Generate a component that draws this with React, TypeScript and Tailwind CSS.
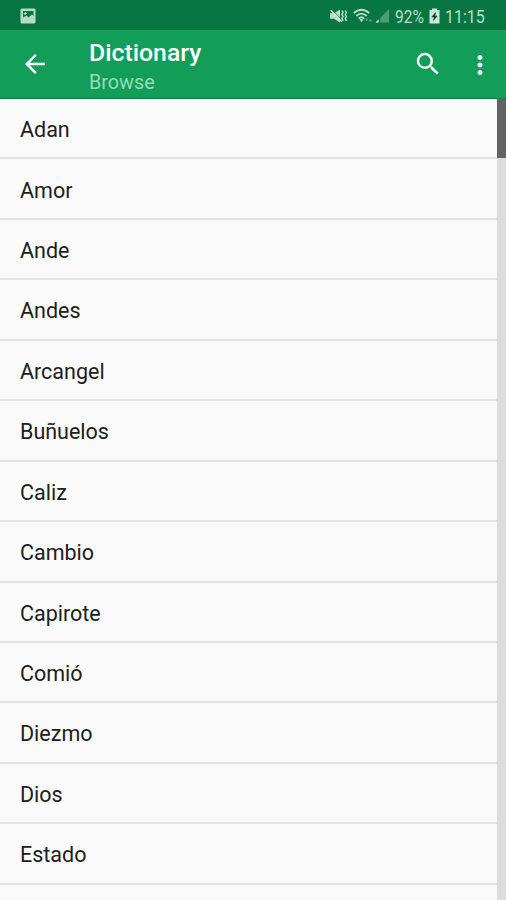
import { MdArrowBack, MdMoreVert, MdSearch } from 'react-icons/md';

const words = [
  'Adan',
  'Amor',
  'Ande',
  'Andes',
  'Arcangel',
  'Buñuelos',
  'Caliz',
  'Cambio',
  'Capirote',
  'Comió',
  'Diezmo',
  'Dios',
  'Estado',
];

function ImageIcon() {
  return (
    <svg className="h-4 w-4" viewBox="0 0 16 16" aria-hidden="true">
      <rect x="0.5" y="0.5" width="15" height="15" rx="1.5" fill="#b5dbc3" />
      <path d="M3 3h10.500v5L12 6.500 8.500 9.500 6.500 7.500 3 9.500z" fill="#087642" />
      <path d="M3.500 5.500l2-1.500 1.500 1.500-2 1.500z" fill="#b5dbc3" />
    </svg>
  );
}

function MuteIcon() {
  return (
    <svg className="h-4 w-[18px]" viewBox="0 0 18 16" aria-hidden="true">
      <path d="M0 5.200h4L10 1.500v13L4 10.800H0z" fill="#b9dfc8" />
      <path d="M2.500 2l9 9.500" stroke="#087642" strokeWidth=".8" />
      <path d="M.8 2.300l11 11.400" stroke="#c9e8d5" strokeWidth="1.6" />
      <path
        d="M12 2.500l1 2-1 2 1 2-1 2 1 2.500M15.300 2.500l1 2-1 2 1 2-1 2 1 2.500"
        fill="none"
        stroke="#b9dfc8"
        strokeWidth="1.5"
      />
    </svg>
  );
}

function WifiIcon() {
  return (
    <svg className="h-4 w-5" viewBox="0 0 20 16" aria-hidden="true">
      <g fill="none" stroke="#b9dfc8" strokeWidth="1.8">
        <path d="M.8 5.200Q8.500-1.800 16.200 5.200" />
        <path d="M3.300 8Q8.500 3.200 13.700 8" />
        <path d="M5.700 10.600Q8.500 8 11.300 10.600" />
      </g>
      <path d="M6.500 11.800Q8.500 10 10.500 11.800L8.500 14z" fill="#b9dfc8" />
      <path d="M12 10.500h3.500L13.800 13.500zM15.500 13.500H19L17.300 10.500z" fill="#4b9f72" />
    </svg>
  );
}

function SignalIcon() {
  return (
    <svg className="h-4 w-[15px]" viewBox="0 0 15 16" aria-hidden="true">
      <path d="M14 1v13.500H1z" fill="#4b9f72" />
      <path d="M4.300 9v6" stroke="#087642" strokeWidth="1.4" />
      <path d="M3.600 11.300v3.200H.4z" fill="#c9e8d5" />
    </svg>
  );
}

function BatteryIcon() {
  return (
    <svg className="h-4 w-[11px]" viewBox="0 0 11 16" aria-hidden="true">
      <path d="M3 .5h5V2h2.500v13.500H.5V2H3z" fill="#c9e8d5" />
      <path d="M6.500 4.500L2.800 9h2.400l-.8 3.500L8.200 8H6z" fill="#123f2a" stroke="#123f2a" strokeWidth=".5" />
    </svg>
  );
}

function StatusBar() {
  return (
    <div className="flex h-[30px] shrink-0 items-center bg-[#087642] pt-0.5 pl-5 text-[#b9dfc8]">
      <ImageIcon />
      <div className="ml-auto flex items-center pr-[21px]">
        <MuteIcon />
        <span className="ml-[5px] flex">
          <WifiIcon />
        </span>
        <span className="ml-[2px] flex">
          <SignalIcon />
        </span>
        <span className="ml-[5px] w-[30px] origin-left scale-x-[.82] pt-px text-[19px] leading-none whitespace-nowrap">
          92%
        </span>
        <span className="ml-[4px] flex">
          <BatteryIcon />
        </span>
        <span className="ml-[5px] w-[40px] origin-left scale-x-[.84] pt-px text-[19px] leading-none whitespace-nowrap">
          11:15
        </span>
      </div>
    </div>
  );
}

function AppBar() {
  return (
    <header className="flex h-[69px] shrink-0 items-center border-b border-[#078448] bg-[#129d59] text-white">
      <button className="ml-5" aria-label="Back">
        <MdArrowBack className="size-[30px]" />
      </button>
      <div className="ml-[39px] flex-1 pt-1">
        <h1 className="pt-[3px] text-[24.8px] leading-[30px] font-medium">Dictionary</h1>
        <p className="pt-px text-[19.8px] leading-[28px] text-[#96dcb5]">Browse</p>
      </div>
      <button className="mr-[22px]" aria-label="Search">
        <MdSearch className="size-[30px]" />
      </button>
      <button className="mr-[11px] pt-px" aria-label="More options">
        <MdMoreVert className="size-[30px]" />
      </button>
    </header>
  );
}

export default function App() {
  return (
    <div className="flex h-[900px] w-[506px] flex-col overflow-hidden bg-[#fafafa] font-['Roboto',sans-serif]">
      <StatusBar />
      <AppBar />
      <main className="relative min-h-0 flex-1 overflow-hidden">
        <ul>
          {words.map((word) => (
            <li
              key={word}
              className="flex h-[60.45px] items-center border-b-2 border-[#e4e4e4] pt-1 pl-5 text-[21.5px] text-[#202020]"
            >
              {word}
            </li>
          ))}
        </ul>
        <div className="absolute top-0 right-0 h-full w-[9px] bg-[#dcdcdc]">
          <div className="h-[59px] bg-[#626262]" />
        </div>
      </main>
    </div>
  );
}
